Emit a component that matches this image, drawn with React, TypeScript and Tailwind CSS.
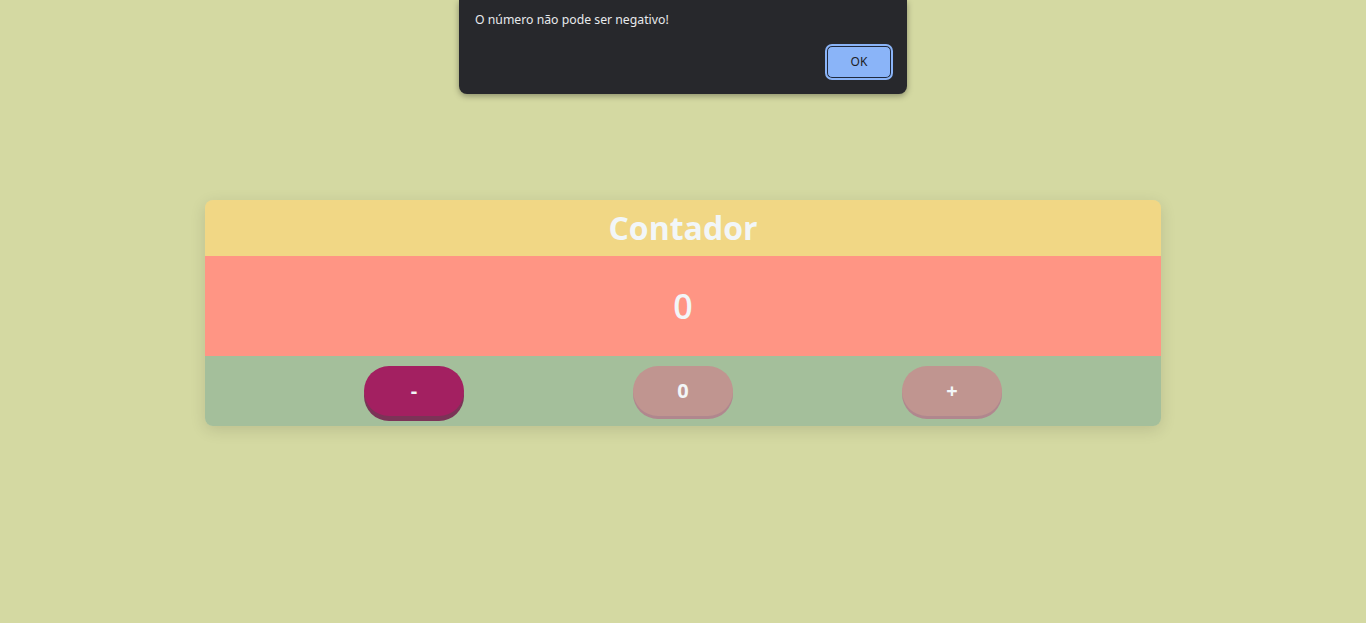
import { useState } from "react";

export default function App() {
  const [count, setCount] = useState(0);

  return (
    <div className="relative h-[623px] w-full bg-[#d4d9a2] font-['Open_Sans',sans-serif]">
      {/* alert dialog */}
      <div className="absolute left-[459px] top-0 z-10 h-[94px] w-[448px] rounded-b-lg bg-[#27282c] shadow-[0_2px_6px_rgba(0,0,0,0.35)]">
        <p className="pl-4 pt-[11px] font-['Noto_Sans',sans-serif] text-[12.25px] text-[#e8eaed]">
          O número não pode ser negativo!
        </p>
        <div className="flex justify-end pr-4 pt-[17px]">
          <button className="h-8 w-16 rounded-[5px] border border-[#1f2a3f] bg-[#8ab4f8] font-['Noto_Sans',sans-serif] text-[12px] text-[#202124] outline-2 outline-[#8ab4f8]">
            OK
          </button>
        </div>
      </div>

      <div className="flex justify-center pt-[200px]">
        <div className="w-[956px] overflow-hidden rounded-lg shadow-[0_4px_16px_rgba(0,0,0,0.12)]">
          <div className="flex h-14 items-center justify-center bg-[#f1d785] pb-px">
            <h1 className="text-[32px] font-bold text-[#f2f6f8]">Contador</h1>
          </div>
          <div className="flex h-[100px] items-center justify-center bg-[#ff9584]">
            <span className="text-[34px] font-semibold text-[#f2f6f8]">{count}</span>
          </div>
          <div className="flex h-[70px] justify-center gap-[169px] bg-[#a4bf9b] pt-[10px]">
            <button
              onClick={() => setCount(count - 1)}
              className="h-[50px] w-[100px] rounded-[25px] bg-[#a32061] text-[20px] font-bold text-[#f2f6f8] shadow-[0_5px_0_#7b3357]"
            >
              -
            </button>
            <button
              onClick={() => setCount(0)}
              className="h-[50px] w-[100px] rounded-[25px] bg-[#c09590] text-[20px] font-bold text-[#f2f6f8] shadow-[0_3px_0_#b0878e]"
            >
              0
            </button>
            <button
              onClick={() => setCount(count + 1)}
              className="h-[50px] w-[100px] rounded-[25px] bg-[#c09590] text-[20px] font-bold text-[#f2f6f8] shadow-[0_3px_0_#b0878e]"
            >
              +
            </button>
          </div>
        </div>
      </div>
    </div>
  );
}
